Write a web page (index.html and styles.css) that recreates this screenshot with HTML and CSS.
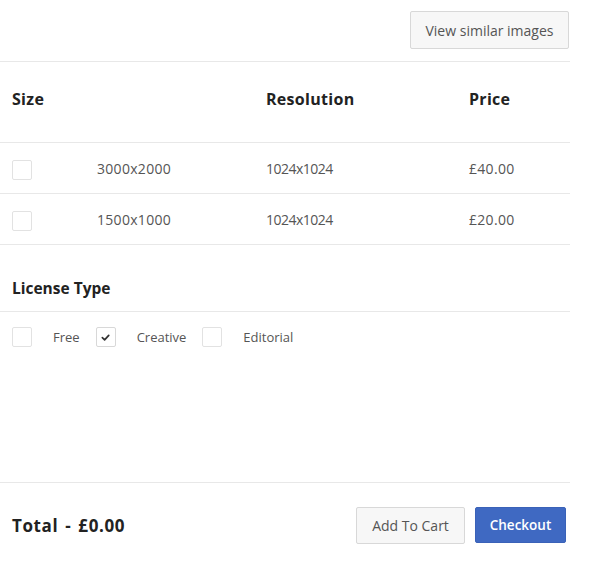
FILE: index.html
```html
<!DOCTYPE html>
<html>
<head>
<meta charset="utf-8">
<link rel="stylesheet" href="styles.css">
</head>
<body>
<div class="page">
  <div class="top">
    <button class="btn btn-light btn-similar">View similar images</button>
  </div>
  <div class="table">
    <div class="row head">
      <div class="cell">Size</div>
      <div class="cell"></div>
      <div class="cell">Resolution</div>
      <div class="cell">Price</div>
    </div>
    <div class="row item">
      <div class="cell"><span class="box"></span></div>
      <div class="cell wide">3000x2000</div>
      <div class="cell narrow">1024x1024</div>
      <div class="cell wide">£40.00</div>
    </div>
    <div class="row item">
      <div class="cell"><span class="box"></span></div>
      <div class="cell wide">1500x1000</div>
      <div class="cell narrow">1024x1024</div>
      <div class="cell wide">£20.00</div>
    </div>
  </div>
  <div class="license">
    <div class="license-title">License Type</div>
    <div class="options">
      <span class="box"></span><span class="opt">Free</span>
      <span class="box checked"><svg viewBox="0 0 10 10" width="9" height="9"><path d="M1.5 5.2 L4 7.6 L8.6 2.6" fill="none" stroke="#333" stroke-width="1.9" stroke-linecap="round" stroke-linejoin="round"/></svg></span><span class="opt">Creative</span>
      <span class="box"></span><span class="opt">Editorial</span>
    </div>
  </div>
  <div class="spacer"></div>
  <div class="footer">
    <div class="total">Total - £0.00</div>
    <div class="actions">
      <button class="btn btn-light btn-cart">Add To Cart</button>
      <button class="btn btn-primary">Checkout</button>
    </div>
  </div>
</div>
</body>
</html>
```
FILE: styles.css
```css
html, body {
  margin: 0;
  padding: 0;
  background: #fff;
}
body {
  font-family: "Open Sans", "DejaVu Sans", sans-serif;
  color: #555;
}
.page {
  width: 570px;
  height: 566px;
  display: flex;
  flex-direction: column;
}
.top {
  display: flex;
  justify-content: flex-end;
  padding-top: 11px;
  padding-right: 1px;
  height: 62px;
  box-sizing: border-box;
  border-bottom: 1px solid #e8e8e8;
}
.btn {
  font-family: "Open Sans", "DejaVu Sans", sans-serif;
  font-size: 14px;
  border-radius: 2px;
  cursor: pointer;
  padding: 0;
}
.btn-light {
  background: #f7f7f7;
  border: 1px solid #d8d8d8;
  color: #555;
}
.btn-similar {
  width: 159px;
  height: 38px;
}
.table .row {
  display: grid;
  grid-template-columns: 85px 169px 203px 1fr;
  padding-left: 12px;
  border-bottom: 1px solid #e8e8e8;
}
.row.head {
  height: 81px;
  box-sizing: border-box;
  padding-top: 27px;
  font-size: 16px;
  font-weight: 700;
  letter-spacing: 0.3px;
  color: #222;
  line-height: 20px;
}
.row.item {
  height: 51px;
  box-sizing: border-box;
  align-items: center;
  font-size: 14px;
  color: #555;
}
.row.item .cell {
  padding-top: 1px;
}
.row.item .cell.wide {
  letter-spacing: 0.3px;
}
.row.item .cell.narrow {
  letter-spacing: -0.5px;
}
.box {
  display: inline-flex;
  align-items: center;
  justify-content: center;
  width: 18px;
  height: 18px;
  border: 1px solid #e2e2e2;
  border-radius: 2px;
  background: #fff;
  vertical-align: middle;
  box-sizing: content-box;
}
.row.item .box {
  display: flex;
  margin-top: 2px;
}
.license-title {
  padding-top: 33px;
  height: 67px;
  box-sizing: border-box;
  padding-left: 12px;
  font-size: 15.5px;
  font-weight: 700;
  color: #222;
  line-height: 20px;
  border-bottom: 1px solid #e8e8e8;
}
.options {
  display: flex;
  align-items: center;
  padding-left: 12px;
  padding-top: 15px;
  font-size: 13px;
  color: #555;
}
.opt {
  margin-left: 21px;
  margin-right: 16px;
}
.options .box.checked {
  border-color: #d8d8d8;
}
.spacer {
  flex: 1;
}
.footer {
  height: 84px;
  box-sizing: border-box;
  border-top: 1px solid #e8e8e8;
  display: flex;
  align-items: center;
  justify-content: space-between;
  padding-left: 12px;
  padding-right: 4px;
  padding-top: 2px;
}
.total {
  font-size: 17px;
  font-weight: 700;
  letter-spacing: 0.6px;
  word-spacing: 2px;
  color: #222;
}
.actions {
  display: flex;
  gap: 10px;
}
.btn-cart {
  width: 109px;
  height: 37px;
}
.btn-primary {
  width: 91px;
  height: 36px;
  background: #3f69c2;
  border: 1px solid #3a62b8;
  color: #fff;
  font-weight: 600;
  font-size: 13.5px;
}
```
